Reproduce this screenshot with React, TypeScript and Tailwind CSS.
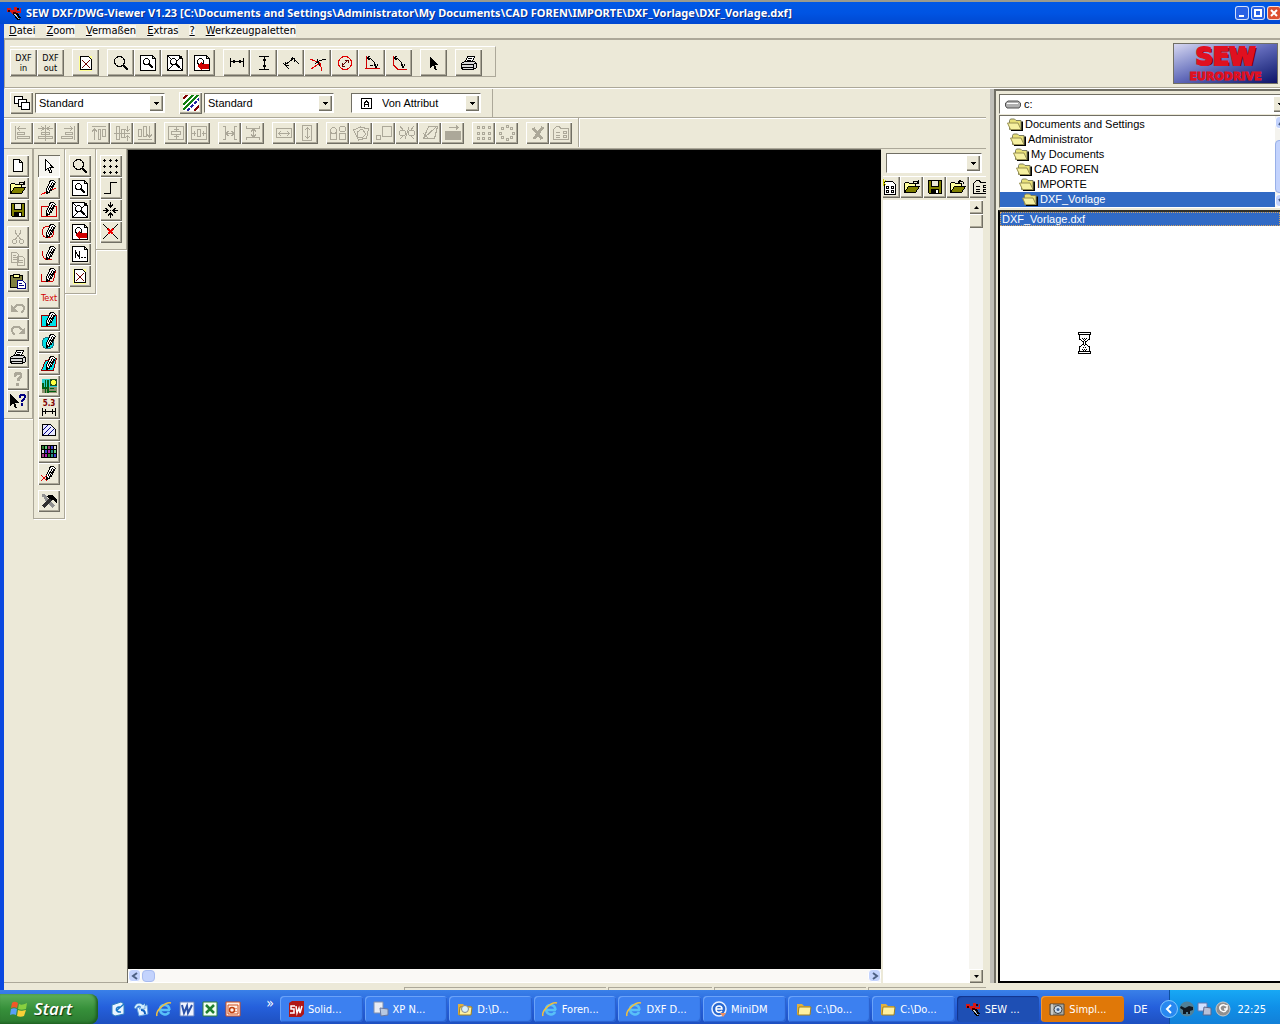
import type { ReactNode } from 'react';
import clsx from 'clsx';

const RAISED = 'bg-[#ece9d8] shadow-[inset_1px_1px_0_#fff,inset_-1px_-1px_0_#716f64,inset_-2px_-2px_0_#aca899]';
const SUNKEN = 'border border-t-[#716f64] border-l-[#716f64] border-r-white border-b-white';

const pencil = (
  <>
    <path d="M9.5 .5h3l2 2-5 9-4 2v-4z" fill="#fff" stroke="#000" />
    <path d="M11.5 2L7 10M13 3L8.5 11" stroke="#000" />
    <path d="M5 11h2v3H5z" fill="#000" stroke="none" />
  </>
);

const lens = (
  <>
    <circle cx="6.5" cy="6.5" r="3" fill="#fff" stroke="#000" />
    <path d="M9 9l4 4" stroke="#000" strokeWidth="2" />
  </>
);

const sheet = <path d="M.5 .5h12l3 3v12h-15z M12.5 .5v3h3" fill="#fff" stroke="#000" />;

const folder = (
  <>
    <path d="M.5 13.5v-9l1-1h3l1 1h6v3" fill="#ffff9c" stroke="#000" />
    <path d="M.5 13.5l4-6h11l-4 6z" fill="#808000" stroke="#000" />
  </>
);

const icons: Record<string, ReactNode> = {
  page: <path d="M3.5 1.5h6l3 3v9h-9z M9.5 1.5v3h3" fill="#fff" stroke="#000" />,
  open: <>{folder}<path d="M9 3.5c1-2 4-2 5 0M14.5 1v3h-3" /></>,
  openBack: <>{folder}<path d="M14 5c0-3-3-3-5-2M10.5 1L8.5 3l2 2" /></>,
  save: (
    <>
      <path d="M1.5 1.5h13v13h-12l-1-1z" fill="#808000" stroke="#000" />
      <path d="M4.5 1.5h7v6h-7z" fill="#ece9d8" stroke="#000" />
      <path d="M4 10h8v4H4z" fill="#000" stroke="none" />
      <path d="M9 11h2v3H9z" fill="#fff" stroke="none" />
    </>
  ),
  cut: <><path d="M5.5 1v3l5 6M10.5 1v3l-5 6" /><circle cx="4.5" cy="12.5" r="2" /><circle cx="11.5" cy="12.5" r="2" /></>,
  copy: <path d="M1.5 1.5h5l2 2v8h-7zM3 4.5h3M3 6.5h4M3 8.5h4M7.5 5.5h5l2 2v7h-7zM9 9.5h4M9 11.5h4" />,
  paste: (
    <>
      <path d="M.5 2.5h12v12H.5z" fill="#808040" stroke="#000" />
      <path d="M3.5 1.5h6v3h-6z" fill="#ffff9c" stroke="#000" />
      <path d="M7.5 7.5h5l3 3v5h-8z" fill="#fff" stroke="#000080" />
      <path d="M9 10.5h3M9 12.5h5" stroke="#000080" />
    </>
  ),
  undo: <><path d="M4 8c3-5 10-4 10 0 0 3-2 4-3 4" strokeWidth="2" /><path d="M1 5v7h7z" fill="currentColor" stroke="none" /></>,
  redo: <><path d="M12 8c-3-5-10-4-10 0 0 3 2 4 3 4" strokeWidth="2" /><path d="M15 5v7H8z" fill="currentColor" stroke="none" /></>,
  print: (
    <>
      <path d="M4.5 6.5l2-5h7l-2 5" fill="#fff" />
      <path d="M.5 8.5l3-2h10l2 2v4l-3 2h-11l-1-2z" fill="#d8d8d8" />
      <path d="M.5 9.5h12l3-2M1 12.5h11M7 3.5h4M6 5.5h4M12.5 9.5v5" />
    </>
  ),
  help: <><path d="M5 6c-1-5 7-5 6-1 0 2-3 2-3 5" strokeWidth="3" /><path d="M6 12h3v3H6z" fill="currentColor" stroke="none" /></>,
  whatsThis: (
    <>
      <path d="M0 1v12l3-3 2 5h2l-2-5h4z" fill="#000" stroke="none" />
      <path d="M10 5c-1-4 5-4 5-1 0 2-3 2-3 5M12 10v3" stroke="#000080" strokeWidth="2" />
    </>
  ),
  pointer: <path d="M4.5 1.5v11l2.5-2.5 2 5 2-1-2-4.5h3z" fill="#fff" />,
  line: <><path d="M0 14.5L15 8" stroke="#f00000" />{pencil}</>,
  rect: <><path d="M.5 4.5h15v10H.5z" stroke="#d00000" />{pencil}</>,
  circle: <><circle cx="7" cy="8" r="6" stroke="#d00000" />{pencil}</>,
  arc: <><path d="M2 5c-2 6 3 11 9 8" stroke="#d00000" />{pencil}</>,
  polyline: <><path d="M.5 6v7l6 1 6-1 2-11" stroke="#d00000" />{pencil}</>,
  fillRect: <><path d="M.5 3.5h15v11H.5z" fill="#00e0e8" stroke="#900000" />{pencil}</>,
  fillCircle: <><circle cx="7" cy="9" r="6" fill="#00e0e8" stroke="#207080" />{pencil}</>,
  fillPoly: <><path d="M4.5 4.5l11-2-3 12h-12z" fill="#00e0e8" stroke="#900000" />{pencil}</>,
  picture: (
    <g stroke="none">
      <path d="M1 1h15v8H1z" fill="#30d0d0" />
      <path d="M1 9h15v6H1z" fill="#909070" />
      <path d="M9 1h7v7H9z" fill="#205020" />
      <circle cx="12.5" cy="4.5" r="2.5" fill="#ffff40" />
      <path d="M4 2h1v13H4zM6 2h2v13H6zM1 5h2v4h5v2H1zM9 10h4v1H9zM8 13h7v1H8z" fill="#006010" />
    </g>
  ),
  hatch: (
    <>
      <path d="M1.5 2.5h8l5 5v6h-13z" fill="#e8e8ff" stroke="#000" />
      <path d="M2 8l5-5M2 13l8-8M7 13l6-6" stroke="#000080" />
    </>
  ),
  palette: (
    <g stroke="none">
      <path d="M0 1h16v13H0z" fill="#000" />
      <path d="M1 2h2v3H1zM7 10h2v3H7z" fill="#308030" />
      <path d="M4 2h2v3H4zM13 6h2v3h-2z" fill="#60d080" />
      <path d="M7 2h2v3H7zM1 10h2v3H1z" fill="#a04080" />
      <path d="M10 2h2v3h-2zM4 6h2v3H4zM13 10h2v3h-2z" fill="#4040d0" />
      <path d="M13 2h2v3h-2zM1 6h2v3H1z" fill="#e0e0e0" />
      <path d="M7 6h2v3H7zM4 10h2v3H4z" fill="#b020b0" />
      <path d="M10 6h2v3h-2zM10 10h2v3h-2z" fill="#209080" />
    </g>
  ),
  erase: <>{pencil}<path d="M0 9l6 6M6 9l-6 6" stroke="#e00000" /></>,
  hammer: (
    <>
      <path d="M1 2l3 1 1 3 8 8" stroke="#909090" strokeWidth="3" />
      <path d="M2 14l8-8" stroke="#303030" strokeWidth="3" />
      <path d="M6 3c3-3 7-1 10 3v4l-4-3-4-1z" fill="#000" stroke="none" />
    </>
  ),
  zoom: (
    <>
      <circle cx="6.5" cy="6.5" r="5" />
      <path d="M10 10l5 5" strokeWidth="2" />
    </>
  ),
  zoomSheet: <>{sheet}{lens}</>,
  zoomAll: <>{sheet}<path d="M1 15L15 1M1 1l14 14" />{lens}</>,
  zoomBack: <>{sheet}{lens}<path d="M3 11l5-4v2h7v5H8v1z" fill="#d00000" stroke="none" /></>,
  zoomNamed: <>{sheet}<path d="M3.5 12V5l4 7V5M9 11.5h2M12 11.5h2" /></>,
  redraw: (
    <>
      <path d="M1 1h13v15H1z" fill="#ffff90" stroke="none" />
      <path d="M2.5 1.5h8l3 3v10h-11z" fill="#fff" />
      <path d="M4 5l8 8M12 5l-8 8" stroke="#700000" />
    </>
  ),
  grid: <path d="M0 2.5h3M6 2.5h3M12 2.5h3M0 8.5h3M6 8.5h3M12 8.5h3M0 14.5h3M6 14.5h3M12 14.5h3M1.5 1v3M7.5 1v3M13.5 1v3M1.5 7v3M7.5 7v3M13.5 7v3M1.5 13v3M7.5 13v3M13.5 13v3" />,
  ortho: <path d="M1 13.5h6.5v-11H14" />,
  snap: <path d="M7.5 0v5M5 2.5l2.5 2.500L10 2.5M7.5 11v5M5 13.5L7.5 11l2.5 2.5M0 8.5h5M2.500 6L5 8.5 2.5 11M10 8.5h5M12.500 6L10 8.500l2.5 2.500M7 8.5h1" />,
  cross: <><path d="M0 0l15 15M15 0L0 15" /><path d="M5 5l5 5M10 5l-5 5" stroke="#f00000" strokeWidth="2" /></>,
  dimH: <><path d="M1.5 3v9M14.5 3v9M2 6.5h12" /><path d="M2 6.5l4-2v4zM14 6.5l-4-2v4z" fill="currentColor" stroke="none" /></>,
  dimV: <><path d="M3 1.5h10M3 14.5h10M8.5 2v12" /><path d="M8.5 2l-2 4h4zM8.5 14l-2-4h4z" fill="currentColor" stroke="none" /></>,
  dimAligned: <path d="M0 8l6 6M9 2l7 7M2 10l9-7M2.5 7v3.5H6M8 3.5h3.5V7" />,
  dimCross: <><path d="M0 4l10 4-9 6M10 8l2 8" stroke="#e00000" /><path d="M5 9c2-2 5-4 11-5M7 4l3 7" /></>,
  dimDiameter: <><circle cx="8" cy="8" r="6.5" stroke="#e00000" /><path d="M5 11l6-6M8 5h3v3M5 8v3h3" stroke="#600000" /></>,
  dimAngle: <><path d="M2.5 1v13M1 13.5h15" stroke="#d00000" /><path d="M3 3c6 0 8 4 9 10M3 3l3-2M3 3l3 2M10 9l2 4 2-4M6 10h3" /></>,
  dimAngle2: <><path d="M2.5 1v9l4 4H16" stroke="#d00000" /><path d="M3 3c6 0 8 4 9 10M3 3l3-2M3 3l3 2M10 9l2 4 2-4" /></>,
  arrow: <path d="M4 2v11l3-3 2 5h2l-2-5h3z" fill="#000" stroke="none" />,
  layers: <g fill="#fff"><path d="M.5 1.5h8v7h-8z" /><path d="M4.5 4.5h8v7h-8z" /><path d="M7.5 7.5h8v7h-8z" /></g>,
  lineStyles: (
    <>
      <path d="M0 0h16v16H0z" fill="#fff" stroke="none" />
      <path d="M0 4l4-4M11 16l5-5" stroke="#800000" strokeWidth="2" />
      <path d="M0 10L10 0M0 15L15 0" stroke="#108010" strokeWidth="2" />
      <path d="M4 16L16 4" stroke="#2020a0" strokeWidth="2" strokeDasharray="4 1" />
    </>
  ),
  alignL: <path d="M1.5 1v14M3 3.5h9M6 1L3.5 3.5 6 6M3.5 7.5h7v2h-7zM3.5 11.5h12v2h-12z" />,
  alignC: <path d="M8.5 0v16M1 3.5h5M16 3.5h-5M4 1l3 2.5L4 6M13 1l-3 2.5L13 6M4.5 7.5h8v2h-8zM1.5 11.5h14v2h-14z" />,
  alignR: <path d="M14.5 1v14M4 3.5h9M10 1l2.5 2.5L10 6M5.5 7.5h7v2h-7zM1.5 11.5h11v2h-11z" />,
  alignT: <path d="M1 1.5h14M3.5 15V4M1 6.5L3.5 4 6 6.5M7.5 4.5h2v10h-2zM11.5 4.5h3v7h-3z" />,
  alignM: <path d="M0 8.5h16M2.5 1.5h3v13h-3zM7.5 4.5h3v8h-3zM13.5 1v5M11 4l2.5 2L16 4M13.5 16v-5M11 13l2.5-2 2.5 2" />,
  alignB: <path d="M1 14.5h14M1.5 4.5h3v7h-3zM6.5 1.5h3v10h-3zM12.5 1v11M10 9.5l2.5 2.5L15 9.5" />,
  centerV: <path d="M.5 1.5h15v13H.5zM3.5 6.5h9v3h-9zM8.5 2v4M6 4.5h5M8.5 10v4M6 11.5h5" />,
  centerH: <path d="M.5 1.5h15v13H.5zM6.5 4.5h3v7h-3zM1 8.5h4M3.5 6v5M15 8.5h-4M12.5 6v5" />,
  spaceH: <path d="M1 1.5h2.5v13H1M15 1.5h-2.5v13H15M4 8.5h8M6.5 6L4 8.5 6.5 11M9.5 6L12 8.5 9.5 11" />,
  spaceV: <path d="M1.5 1v2.5h13V1M1.5 15v-2.5h13V15M8.5 4v8M6 6.5L8.5 4 11 6.5M6 9.5L8.5 12 11 9.5" />,
  sameW: <path d="M.5 3.5h15v9H.5zM2 8.5h12M5 6L2.5 8.5 5 11M11 6l2.5 2.5L11 11" />,
  sameH: <path d="M3.5 .5h9v15h-9zM8.5 2v12M6 5l2.5-2.5L11 5M6 11l2.5 2.5L11 11" />,
  group: <><path d="M.5 8.5h6v6h-6zM9.5 8.5h6v6h-6z" /><circle cx="3.5" cy="5.5" r="3" /><circle cx="12.5" cy="4" r="3" /></>,
  rotate: <path d="M.5 5l7-3 8 2-2 9-8 2zM4 7l5-3 4 5-4 4-5-1z" />,
  scale: <path d="M6.5 1.5h9v10h-9zM.5 10.5h4v4h-4z" />,
  mirror: <><path d="M1 1l3 4M15 1l-3 4M1 14l3-3M12 11l3 3M6 14l4-12" /><circle cx="3.5" cy="8" r="3" /><circle cx="12.5" cy="8" r="3" /></>,
  shear: <path d="M6.5 1.5h9l-3 12h-11zM2 13L14 2M1 8l6 6" />,
  reverse: <><path d="M0 6h16v9H0z" fill="currentColor" stroke="none" /><path d="M4 2.5h9M11 .5l2 2-2 2" /></>,
  array: <path d="M1.5 1.5h2v2h-2zM6.5 1.5h2v2h-2zM12.5 1.5h2v2h-2zM1.5 7.5h2v2h-2zM6.5 7.5h2v2h-2zM12.5 7.5h2v2h-2zM1.5 12.5h2v2h-2zM6.5 12.5h2v2h-2zM12.5 12.5h2v2h-2z" />,
  polar: <path d="M7.5 .5h2v2h-2zM2.5 2.5h2v2h-2zM11.5 2.5h2v2h-2zM.5 7.5h2v2h-2zM13.5 7.5h2v2h-2zM2.5 11.5h2v2h-2zM11.5 11.5h2v2h-2zM7.5 13.5h2v2h-2z" />,
  remove: <path d="M3 3l9 11M13 2L4 14" strokeWidth="3" />,
  props: <path d="M.5 4.5l3-3h3l1 2h8v11H.5zM3 7.5h4M3 10.5h4M3 12.5h4M10 6.5h3v2h-3zM10 10.5h3v2h-3z" />,
  newTable: (
    <>
      <path d="M3.5 2.5h8l3 3v10h-11z" fill="#fff" />
      <path d="M5.5 7.5h2v2h-2zM10.5 7.5h2v2h-2zM5.5 11.5h2v2h-2zM10.5 11.5h2v2h-2z" />
      <path d="M0 1l5 5M5 1L0 6M2.5 0v7" stroke="#d0d000" />
    </>
  ),
};

function Icon({ name }: { name: string }) {
  return (
    <svg
      viewBox="0 0 16 16"
      className="w-4 h-4 shrink-0"
      fill="none"
      stroke="currentColor"
      shapeRendering="crispEdges"
      aria-hidden="true"
    >
      {icons[name]}
    </svg>
  );
}

function ToolButton({ name, size = 'sm', pressed, disabled }: { name: string; size?: 'sm' | 'wide' | 'lg'; pressed?: boolean; disabled?: boolean }) {
  return (
    <button
      aria-label={name}
      disabled={disabled}
      className={clsx(
        'flex items-center justify-center shrink-0',
        size === 'sm' && 'w-[22px] h-[22px]',
        size === 'wide' && 'w-[23px] h-[22px]',
        size === 'lg' && 'w-[27px] h-[27px]',
        disabled ? 'text-[#aca899]' : 'text-black',
        pressed ? 'bg-[#f6f5f0] shadow-[inset_1px_1px_0_#716f64,inset_-1px_-1px_0_#fff]' : RAISED,
      )}
    >
      {name === 'text' && <span className="text-[9px] leading-3 text-[#d00000]">Text</span>}
      {name === 'measure' && (
        <span className="flex flex-col items-center text-[8px] leading-[8px] font-bold text-[#800000]">
          5.3
          <svg viewBox="0 0 14 8" className="w-[14px] h-2" stroke="#000" fill="none" shapeRendering="crispEdges">
            <path d="M.5 0v8M13.5 0v8M1 3.5h12M3.5 1v5M10.5 1v5" />
          </svg>
        </span>
      )}
      {name !== 'text' && name !== 'measure' && <Icon name={name} />}
    </button>
  );
}

function ToolGroups({ groups, size, disabled }: { groups: string[][]; size: 'wide' | 'lg'; disabled?: boolean }) {
  return (
    <>
      {groups.map((group) => (
        <div key={group[0]} className="flex">
          {group.map((name) => (
            <ToolButton key={name} name={name} size={size} disabled={disabled} />
          ))}
        </div>
      ))}
    </>
  );
}

function DropArrow({ className }: { className?: string }) {
  return (
    <span className={clsx('flex items-center justify-center pointer-events-none', RAISED, className)}>
      <svg viewBox="0 0 5 3" className="w-[5px] h-[3px]" shapeRendering="crispEdges"><path d="M0 0h5L2.5 3z" /></svg>
    </span>
  );
}

function Combo({ label, value, className, children }: { label: string; value: string; className: string; children?: ReactNode }) {
  return (
    <label className={clsx('relative flex items-center h-5 bg-white', SUNKEN, className)}>
      {children}
      <select aria-label={label} className="appearance-none flex-1 min-w-0 h-full pl-[3px] text-[11px] bg-transparent outline-none">
        <option>{value}</option>
      </select>
      <DropArrow className="absolute right-px top-px bottom-px w-[14px]" />
    </label>
  );
}

function Palette({ groups, className }: { groups: string[][]; className?: string }) {
  return (
    <div className={clsx('flex flex-col items-center gap-[5px] py-[6px] self-start border-r border-b border-[#aca899] shadow-[1px_1px_0_#fff]', className)}>
      {groups.map((group) => (
        <div key={group[0]} className="flex flex-col">
          {group.map((name) => (
            <ToolButton
              key={name}
              name={name}
              pressed={name === 'pointer'}
              disabled={['cut', 'copy', 'undo', 'redo', 'help'].includes(name)}
            />
          ))}
        </div>
      ))}
    </div>
  );
}

function FolderGlyph() {
  return (
    <svg viewBox="0 0 16 13" className="w-4 h-[13px] shrink-0" aria-hidden="true">
      <path d="M3 3.5h13V13H4" fill="#000" />
      <path d="M2.5 11.5v-9l1-1.5h4l1.5 1.5h5v9z" fill="#e8e078" stroke="#808060" />
      <path d="M.5 5H11l3 6.5H3.5z" fill="#f6f0a0" stroke="#989050" />
    </svg>
  );
}

function XpScrollButton({ dir, className }: { dir: 'left' | 'right' | 'up' | 'down'; className?: string }) {
  const paths = { left: 'M7 2L3 5l4 3', right: 'M3 2l4 3-4 3', up: 'M2 7l3-4 3 4', down: 'M2 3l3 4 3-4' };
  return (
    <button aria-label={`Scroll ${dir}`} className={clsx('flex items-center justify-center w-[13px] h-[13px] rounded-sm bg-[#c3d3fd] border border-white shrink-0', className)}>
      <svg viewBox="0 0 10 10" className="w-[10px] h-[10px]" fill="none" stroke="#4d6185" strokeWidth="2"><path d={paths[dir]} /></svg>
    </button>
  );
}

function SewGlyph() {
  return (
    <svg viewBox="0 0 16 16" className="w-4 h-4 shrink-0" shapeRendering="crispEdges" aria-hidden="true">
      <path d="M5 6l8 9M8 5l6 8" stroke="#000" strokeWidth="2" />
      <path d="M6 6l7 8" stroke="#ccc" />
      <path d="M1 3h4v2h3V2h3v4h3V3h1v5H9L6 9 4 7H1z" fill="#d81818" />
      <path d="M2 5h2v2H2zM11 3h2v2h-2zM7 7h3v2H7z" fill="#400000" />
    </svg>
  );
}

const menu = ['Datei', 'Zoom', 'Vermaßen', 'Extras', '?', 'Werkzeugpaletten'];

const mainTools = [
  ['redraw'],
  ['zoom', 'zoomSheet', 'zoomAll', 'zoomBack'],
  ['dimH', 'dimV', 'dimAligned', 'dimCross', 'dimDiameter', 'dimAngle', 'dimAngle2'],
  ['arrow'],
  ['print'],
];

const alignTools = [
  ['alignL', 'alignC', 'alignR'],
  ['alignT', 'alignM', 'alignB'],
  ['centerV', 'centerH'],
  ['spaceH', 'spaceV'],
  ['sameW', 'sameH'],
  ['group', 'rotate', 'scale', 'mirror', 'shear', 'reverse'],
  ['array', 'polar'],
  ['remove', 'props'],
];

const folders = [
  { name: 'Documents and Settings', indent: 'pl-[7px]' },
  { name: 'Administrator', indent: 'pl-[10px]' },
  { name: 'My Documents', indent: 'pl-[13px]' },
  { name: 'CAD FOREN', indent: 'pl-[16px]' },
  { name: 'IMPORTE', indent: 'pl-[19px]' },
  { name: 'DXF_Vorlage', indent: 'pl-[22px]', selected: true },
];

const ie = (
  <>
    <path d="M14 9H4M13 11c-2 4-9 3-9-3 0-5 9-6 9.5 1" fill="none" stroke="#58c0f8" strokeWidth="2.5" />
    <path d="M1 15C-1 10 10 0 15 2" fill="none" stroke="#f0c040" strokeWidth="1.5" />
  </>
);
const yellowFolder = (
  <>
    <path d="M1 3h5l2 2h6v9H1z" fill="#e0b040" />
    <path d="M3 6h12l-1 8H2z" fill="#fff0a0" stroke="#a08020" />
  </>
);

const tasks: { label: string; icon: ReactNode; state?: 'active' | 'alert' }[] = [
  {
    label: 'Solid...',
    icon: (
      <>
        <path d="M1 2l3-2h12v13l-3 3H1z" fill="#b01818" />
        <path d="M7 5H3v3h3v4H2M8 5l1 7 2-5 1 5 2-7" fill="none" stroke="#fff" strokeWidth="1.5" />
      </>
    ),
  },
  { label: 'XP N...', icon: <><path d="M1 1h9v11H1z" fill="#e8ecf4" stroke="#8090b0" /><path d="M7 7l8 1v6l-7 1z" fill="#b8c8e0" stroke="#6878a0" /></> },
  { label: 'D:\\D...', icon: <>{yellowFolder}<circle cx="8" cy="8" r="3.5" fill="#d8f0ff" stroke="#888" /></> },
  { label: 'Foren...', icon: ie },
  { label: 'DXF D...', icon: ie },
  {
    label: 'MiniDM',
    icon: (
      <>
        <circle cx="8" cy="8" r="7" fill="#2868d0" stroke="#e8f0ff" strokeWidth="1.5" />
        <path d="M5 8h6c0-4-6-4-6 0s4 4 6 2" fill="none" stroke="#fff" strokeWidth="1.5" />
        <path d="M9 12h6l-3 4z" fill="#f09060" />
      </>
    ),
  },
  { label: 'C:\\Do...', icon: yellowFolder },
  { label: 'C:\\Do...', icon: yellowFolder },
  { label: 'SEW ...', icon: <SewGlyph />, state: 'active' },
  {
    label: 'Simpl...',
    icon: (
      <>
        <path d="M1 3h14v11H1z" fill="#a8a8a0" stroke="#504840" />
        <circle cx="9" cy="8.5" r="4" fill="#d0e0f0" stroke="#404040" />
        <circle cx="9" cy="8.5" r="1.5" fill="#406090" />
        <path d="M3 3v11" stroke="#eee" />
      </>
    ),
    state: 'alert',
  },
];

const quickLaunch: { label: string; icon: ReactNode }[] = [
  {
    label: 'Desktop',
    icon: (
      <>
        <path d="M2 4l9-3 3 2v10l-9 2-3-2z" fill="#e8f4ff" stroke="#3080c0" />
        <path d="M6 10l8-7M10 6c-5-1-5 6 1 5" stroke="#1878c8" strokeWidth="1.5" fill="none" />
      </>
    ),
  },
  {
    label: 'Outlook',
    icon: (
      <>
        <path d="M4 7l10-3 1 9-9 2z" fill="#e8f4ff" stroke="#60a0e0" />
        <path d="M1 7c1-5 6-6 9-3l2-2v6H6l2-2C6 4 4 5 3 8z" fill="#d0ecff" stroke="#2070c0" strokeWidth=".5" />
        <path d="M8 9c3 0 4 1 4 4" fill="none" stroke="#1060c0" strokeWidth="2" />
      </>
    ),
  },
  { label: 'Internet Explorer', icon: ie },
  { label: 'Word', icon: <><path d="M1 1h14v14H1z" fill="#f0f4ff" stroke="#6080c0" /><path d="M3 4l2 8 3-7 1 7 4-8" fill="none" stroke="#2850a8" strokeWidth="2" /></> },
  { label: 'Excel', icon: <><path d="M1 1h14v14H1z" fill="#f0fff0" stroke="#308040" /><path d="M4 4l8 8M12 4l-8 8" stroke="#208030" strokeWidth="2.5" /></> },
  { label: 'PowerPoint', icon: <><path d="M1 1h14v14H1z" fill="#fff0e8" stroke="#d05020" /><path d="M3 4h10v9H3z" fill="none" stroke="#d05020" /><circle cx="7" cy="9" r="2.5" fill="none" stroke="#c04010" strokeWidth="1.5" /><path d="M11 7v1M11 10v1" stroke="#c04010" /></> },
];

function TaskGlyph({ children }: { children: ReactNode }) {
  return <svg viewBox="0 0 16 16" className="w-4 h-4 shrink-0" aria-hidden="true">{children}</svg>;
}

function TitleBar() {
  return (
    <header className="flex items-center h-6 pl-[6px] border-t-2 border-[#9a9a8e] bg-gradient-to-b from-[#0058e6] via-[#0054e3] to-[#0048d0] overflow-hidden shrink-0">
      <SewGlyph />
      <h1 className="flex-1 min-w-0 pl-1 pb-px truncate text-white font-bold text-[11px] font-['Noto_Sans',sans-serif] [text-shadow:1px_1px_0_#0a2a80]">
        SEW DXF/DWG-Viewer V1.23 [C:\Documents and Settings\Administrator\My Documents\CAD FOREN\IMPORTE\DXF_Vorlage\DXF_Vorlage.dxf]
      </h1>
      <div className="flex gap-[2px] -mr-px shrink-0">
        {[
          { label: 'Minimize', d: 'M3 9h5', bg: 'bg-[#2a62e4]' },
          { label: 'Maximize', d: 'M3 3h6v6H3z', bg: 'bg-[#2a62e4]' },
          { label: 'Close', d: 'M3 3l6 6M9 3l-6 6', bg: 'bg-[#dd5030]' },
        ].map((b) => (
          <button key={b.label} aria-label={b.label} className={clsx('w-[14px] h-[14px] rounded-[3px] border border-white/80', b.bg)}>
            <svg viewBox="0 0 12 12" className="w-3 h-3" stroke="#fff" strokeWidth="2" fill="none"><path d={b.d} /></svg>
          </button>
        ))}
      </div>
    </header>
  );
}

function SymbolPanel() {
  return (
    <div className="flex flex-col w-[105px] shrink-0 pl-[2px] pt-1">
      <Combo label="Symbol library" value="" className="ml-[3px] mr-1" />
      <div className="flex justify-center overflow-hidden mt-[3px] mb-[2px]">
        {['newTable', 'open', 'save', 'openBack', 'props'].map((name) => (
          <ToolButton key={name} name={name} size="wide" />
        ))}
      </div>
      <div className="flex flex-1 mr-[3px] bg-white justify-end">
        <div className="flex flex-col w-[14px] bg-[#f6f5f0]">
          <button aria-label="Scroll up" className={clsx('flex items-center justify-center h-[14px]', RAISED)}>
            <svg viewBox="0 0 5 3" className="w-[5px] h-[3px]"><path d="M0 3h5L2.5 0z" /></svg>
          </button>
          <div className={clsx('h-[14px]', RAISED)} />
          <button aria-label="Scroll down" className={clsx('flex items-center justify-center h-[14px] mt-auto', RAISED)}>
            <svg viewBox="0 0 5 3" className="w-[5px] h-[3px]"><path d="M0 0h5L2.5 3z" /></svg>
          </button>
        </div>
      </div>
    </div>
  );
}

function FileBrowser() {
  return (
    <aside className="flex flex-col w-[286px] shrink-0 overflow-hidden border-t-2 border-l-2 border-[#716f64] pt-[3px] pl-[3px] font-['Liberation_Sans',sans-serif] text-[11px]">
      <label className={clsx('relative flex items-center h-5 pl-[5px] -mr-[9px] bg-white', SUNKEN)}>
        <svg viewBox="0 0 16 9" className="w-4 h-[9px] shrink-0">
          <path d="M3 1h10l2.5 2v3L14 8H2L.5 6V3z" fill="#b0b0b0" stroke="#505050" />
          <path d="M2 3.5h11" stroke="#fff" />
        </svg>
        <select aria-label="Drive" className="appearance-none flex-1 h-full pl-[3px] bg-transparent outline-none">
          <option>c:</option>
        </select>
        <DropArrow className="absolute right-px top-px bottom-px w-[14px]" />
      </label>
      <div className={clsx('flex h-[93px] mt-px -mr-[9px] bg-white', SUNKEN)}>
        <ul className="flex-1 pt-px">
          {folders.map((f) => (
            <li key={f.name}>
              <button className={clsx('flex items-center w-full h-[15px] text-left', f.indent, f.selected && 'bg-[#316ac5] text-white')}>
                <FolderGlyph />
                <span className="pl-[2px]">{f.name}</span>
              </button>
            </li>
          ))}
        </ul>
        <div className="flex flex-col w-[13px] bg-[#f4f3ee]">
          <XpScrollButton dir="up" />
          <div className="flex-1 mt-[11px] mb-px rounded-sm bg-[#c3d3fd] border border-[#98b0e8]" />
          <XpScrollButton dir="down" />
        </div>
      </div>
      <div className="relative flex-1 mt-[2px] -ml-px bg-white border-2 border-r-0 border-black border-t-[#302f28]">
        <ul>
          <li>
            <button className="flex items-center w-full h-[14px] px-[2px] text-left text-white bg-[#316ac5] outline-1 outline-dotted -outline-offset-1 outline-[#d0a060]">DXF_Vorlage.dxf</button>
          </li>
        </ul>
        {/* busy cursor */}
        <svg viewBox="0 0 13 22" className="absolute left-[78px] top-[120px] w-[13px] h-[22px]" fill="none" stroke="#000" shapeRendering="crispEdges">
          <path d="M.5 .5h12v2H.5zM.5 19.5h12v2H.5z" fill="#fff" />
          <path d="M1.5 3v4l4 3v2l-4 3v4M11.5 3v4l-4 3v2l4 3v4" />
          <path d="M4 6.5h1M6 6.5h1M8 6.5h1M5 7.5h1M7 7.5h1M6 8.5h1M6 13.5h1M5 15.5h1M7 15.5h1M4 17.5h1M6 17.5h1M8 17.5h1M5 18.5h1M7 18.5h1" />
        </svg>
      </div>
    </aside>
  );
}

function Taskbar() {
  return (
    <footer className="flex items-stretch h-[34px] shrink-0 bg-gradient-to-b from-[#3a80e8] via-[#2560dc] to-[#1e50c0] text-white text-[11px]">
      <button className="flex items-center gap-[6px] w-[98px] mt-1 pl-[10px] rounded-r-lg bg-gradient-to-b from-[#5cae5c] via-[#36903a] to-[#2c7a30] font-['Open_Sans',sans-serif] font-semibold italic text-[17px] leading-5 [text-shadow:1px_1px_1px_#103810] shadow-[inset_-2px_-1px_3px_#1c5c20]">
        <svg viewBox="0 0 18 18" className="w-[18px] h-[18px]">
          <path d="M2 3c2-2 4-1 6 0L7 8C5 7 3 7 1 8z" fill="#f05828" />
          <path d="M9 4c2 1 4 1 8-1l-1 6c-3 1-6 1-8 0z" fill="#88d040" />
          <path d="M1 9c2-1 4-1 6 0l-1 6c-2-1-4-1-6 0z" fill="#58a0f8" />
          <path d="M8 10c2 1 4 1 8 0l-2 6c-2 1-5 1-7 0z" fill="#f8d038" />
        </svg>
        Start
      </button>
      <nav className="flex items-center gap-[7px] w-[182px] pt-1 pl-3 shrink-0">
        {quickLaunch.map((q) => (
          <button key={q.label} aria-label={q.label}><TaskGlyph>{q.icon}</TaskGlyph></button>
        ))}
        <span className="ml-auto mr-[6px] pb-3 text-[14px] leading-4">»</span>
      </nav>
      <div className="flex flex-1 min-w-0 gap-[2px] pt-[6px] pb-[2px]">
        {tasks.map((t, i) => (
          <button
            key={i}
            className={clsx(
              'flex items-center gap-1 flex-1 min-w-0 pl-2 rounded-sm whitespace-nowrap overflow-hidden',
              !t.state && 'bg-[#3c80f0] shadow-[inset_1px_1px_0_#6aa2f8,inset_-1px_-1px_1px_#2a60cc]',
              t.state === 'active' && 'bg-[#1e4fb4] shadow-[inset_1px_1px_1px_#12348c]',
              t.state === 'alert' && 'bg-[#e07808] shadow-[inset_1px_1px_0_#f09838]',
            )}
          >
            <TaskGlyph>{t.icon}</TaskGlyph>
            {t.label}
          </button>
        ))}
      </div>
      <span className="flex items-center justify-center w-[33px] pt-1">DE</span>
      <div className="flex w-[123px] shrink-0">
        <div className="flex items-center flex-1 ml-3 pt-1 bg-gradient-to-b from-[#18a8f4] via-[#1090e8] to-[#1280d8] shadow-[inset_1px_0_0_#0c50a0]">
          <button aria-label="Show hidden icons" className="-ml-[9px] mr-px flex items-center justify-center w-[18px] h-[18px] rounded-full bg-[#2888f0] border border-[#80c8ff]">
            <svg viewBox="0 0 10 10" className="w-[10px] h-[10px]" stroke="#fff" strokeWidth="2" fill="none"><path d="M7 1L3 5l4 4" /></svg>
          </button>
          <div className="flex gap-[2px]">
            <TaskGlyph><circle cx="8" cy="8" r="7.5" fill="#508098" /><path d="M2 5l4 2 4-2 4 1v3l-3 1v3H9v-2H7v2H4V9L1 7z" fill="#101820" /></TaskGlyph>
            <TaskGlyph><path d="M1 2h9v8H1z" fill="#d0e0ff" stroke="#6078b0" /><path d="M7 6l7 1v7H6z" fill="#b8c0d8" stroke="#586890" /></TaskGlyph>
            <TaskGlyph><circle cx="8" cy="8" r="7" fill="#909090" stroke="#c8c8c8" /><path d="M11 5c-3-3-7 0-6 3s5 4 7 0M12 4v4H9" fill="none" stroke="#fff" strokeWidth="1.5" /></TaskGlyph>
          </div>
          <time className="ml-auto mr-[14px]">22:25</time>
        </div>
      </div>
    </footer>
  );
}

export default function App() {
  return (
    <div className="flex flex-col h-screen overflow-hidden bg-[#ece9d8] text-black text-[11px] leading-[13px] font-['DejaVu_Sans_Condensed',sans-serif]">
      <TitleBar />
      <div className="flex flex-col flex-1 min-h-0 border-l-4 border-[#0a48e0]">
        <nav className="flex items-center gap-[11px] h-[13px] pl-[5px] shrink-0">
          {menu.map((item) => (
            <button key={item} className="h-3 leading-3 bg-[#f8f7f2]">
              <span className="underline">{item[0]}</span>{item.slice(1)}
            </button>
          ))}
        </nav>

        <div className="flex justify-between shrink-0 h-[51px] mt-px border-t-2 border-l border-[#aca899] border-b border-b-white shadow-[inset_0_-1px_0_#aca899]">
          <div className="flex gap-2 self-start mt-[6px] ml-[5px] pr-[13px] pt-[2px] border-t border-t-white border-r border-b border-r-[#aca899] border-b-[#aca899]">
            <div className="flex text-[9px] leading-[10px]">
              <button className={clsx('w-[27px] h-[27px]', RAISED)}>DXF<br />in</button>
              <button className={clsx('w-[27px] h-[27px]', RAISED)}>DXF<br />out</button>
            </div>
            <ToolGroups groups={mainTools} size="lg" />
          </div>
          <div className="flex flex-col items-center justify-center w-[105px] h-[41px] mt-[3px] mr-[2px] border border-[#716f64] bg-gradient-to-br from-[#d8d8f0] via-[#6068b8] to-[#101068] text-[#e01020] font-bold font-['DejaVu_Sans',sans-serif]">
            <span className="text-[24px] leading-[25px] [-webkit-text-stroke:2px_#e01020] [text-shadow:2px_1px_0_#500000]">SEW</span>
            <span className="text-[11px] leading-[13px] [-webkit-text-stroke:1px_#e01020]">EURODRIVE</span>
          </div>
        </div>

        <div className="flex flex-1 min-h-0">
          <main className="flex flex-col flex-1 min-w-0">
            <div className="flex items-center h-[29px] shrink-0 pl-[6px] font-['Liberation_Sans',sans-serif] border-b border-[#aca899] shadow-[0_1px_0_#fff]">
              <ToolButton name="layers" size="wide" />
              <Combo label="Layer" value="Standard" className="w-[130px] ml-[2px]" />
              <div className="w-[14px]" />
              <ToolButton name="lineStyles" size="wide" />
              <Combo label="Line style" value="Standard" className="w-[130px] ml-[2px]" />
              <Combo label="Text attribute" value="Von Attribut" className="w-[130px] ml-[17px] pl-[9px]">
                <svg viewBox="0 0 11 11" className="w-[11px] h-[11px] mr-[7px]" fill="none" stroke="#000" shapeRendering="crispEdges">
                  <path d="M.5 .5h10v10H.5zM3.5 9V5l2-2 2 2v4M4 6.5h3" />
                </svg>
              </Combo>
              <div className="h-full ml-[11px] border-l border-[#aca899] shadow-[inset_1px_0_0_#fff]" />
            </div>
            <div className="flex h-[31px] shrink-0 border-b border-[#aca899]">
              <div className="flex items-center gap-2 px-[6px] mb-px border-r border-[#aca899] shadow-[1px_0_0_#fff]">
                <ToolGroups groups={alignTools} size="wide" disabled />
              </div>
            </div>

            <div className="flex flex-1 min-h-0">
              <div className="flex w-[123px] shrink-0 border-b border-[#aca899]">
                <Palette className="w-[29px]" groups={[['page', 'open', 'save'], ['cut', 'copy', 'paste'], ['undo', 'redo'], ['print', 'help', 'whatsThis']]} />
                <Palette
                  className="w-[32px] border-l"
                  groups={[
                    ['pointer', 'line', 'rect', 'circle', 'arc', 'polyline', 'text', 'fillRect', 'fillCircle', 'fillPoly', 'picture', 'measure', 'hatch', 'palette', 'erase'],
                    ['hammer'],
                  ]}
                />
                <Palette className="w-[31px]" groups={[['zoom', 'zoomSheet', 'zoomAll', 'zoomBack', 'zoomNamed', 'redraw']]} />
                <Palette className="w-[31px]" groups={[['grid', 'ortho', 'snap', 'cross']]} />
              </div>
              <div className="flex flex-col flex-1 min-w-0 border-l border-t border-[#716f64]">
                <div className="flex-1 bg-black" />
                <div className="flex items-center h-[14px] gap-px bg-[#faf9f6] border-b border-white">
                  <XpScrollButton dir="left" />
                  <div className="w-[13px] h-3 rounded-sm bg-[#c3d3fd] border border-[#a8bcf0]" />
                  <XpScrollButton dir="right" className="ml-auto" />
                </div>
              </div>
              <SymbolPanel />
            </div>
          </main>
          <div className="w-[4px] ml-1 bg-[#c0bfb8]" />
          <FileBrowser />
        </div>

        <div className="flex gap-[2px] h-[7px] pt-1 shrink-0">
          <div className="w-[398px]" />
          <div className="w-[202px] border-t border-l border-[#aca899]" />
          <div className="w-[104px] border-t border-l border-[#aca899]" />
          <div className="w-[152px] border-t border-l border-[#aca899]" />
          <div className="w-[118px] border-t border-l border-[#aca899]" />
        </div>
      </div>
      <Taskbar />
    </div>
  );
}
